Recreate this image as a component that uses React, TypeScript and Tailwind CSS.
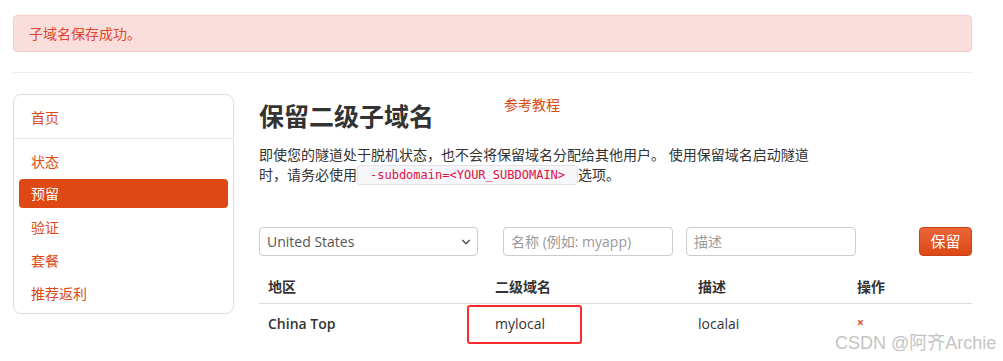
import { ChevronDown } from "lucide-react";

const font = { fontFamily: '"Open Sans", "Noto Sans CJK SC", sans-serif' };

const navItems = ["状态", "预留", "验证", "套餐", "推荐返利"];

export default function App() {
  return (
    <div className="relative min-h-[361px] w-[1003px] bg-white text-[14px] text-[#333]" style={font}>
      <div className="w-[972px] pl-[13px] pt-[15px]">
        {/* alert */}
        <div className="flex h-[37px] items-center rounded-[4px] border border-[#f7cbc8] bg-[#fadedb] px-[15px] text-[#e2432f]">
          子域名保存成功。
        </div>

        <div className="mt-[20px] h-px bg-[#eeeeee]" />

        <div className="mt-[21px] flex gap-[25px]">
          {/* sidebar */}
          <div className="h-[220px] w-[221px] shrink-0 rounded-[8px] border border-[#dddddd] px-[5px] pt-[6px]">
            <div className="flex h-[33px] items-center px-[12px] text-[#dd4814]">首页</div>
            <div className="-mx-[5px] mt-[4px] mb-[6px] h-px bg-[#e5e5e5]" />
            {navItems.map((item) =>
              item === "预留" ? (
                <div
                  key={item}
                  className="mt-[1px] mb-[3px] flex h-[29px] items-center rounded-[4px] bg-[#dd4814] px-[12px] text-white"
                >
                  {item}
                </div>
              ) : (
                <div key={item} className="flex h-[33px] items-center px-[12px] text-[#dd4814]">
                  {item}
                </div>
              )
            )}
          </div>

          {/* main */}
          <div className="flex-1">
            <div className="flex items-start">
              <h2 className="mt-[4px] text-[25px] leading-[36px] font-bold text-[#333]">保留二级子域名</h2>
              <a className="mt-[1px] ml-[70px] text-[14px] leading-[20px] text-[#dd4814]">参考教程</a>
            </div>

            <p className="mt-[11px] w-[563px] leading-[20px]">
              即使您的隧道处于脱机状态，也不会将保留域名分配给其他用户。 使用保留域名启动隧道时，请务必使用
              <code
                className="inline-block rounded-[3px] border border-[#e1e1e8] bg-[#f7f7f9] px-[12px] align-top text-[12px] leading-[18px] text-[#dd1144]"
                style={{ fontFamily: '"DejaVu Sans Mono", monospace' }}
              >
                -subdomain=&lt;YOUR_SUBDOMAIN&gt;
              </code>
              选项。
            </p>

            {/* form */}
            <div className="mt-[42px] flex items-center">
              <div className="flex h-[29px] w-[219px] items-center justify-between rounded-[4px] border border-[#cccccc] pr-[4px] pl-[7px] text-[#555]">
                <span>United States</span>
                <ChevronDown size={14} strokeWidth={2} className="text-[#444]" />
              </div>
              <div className="ml-[25px] flex h-[29px] w-[170px] items-center rounded-[4px] border border-[#cccccc] px-[7px] text-[#9a9a9a]">
                名称 (例如: myapp)
              </div>
              <div className="ml-[13px] flex h-[29px] w-[170px] items-center rounded-[4px] border border-[#cccccc] px-[7px] text-[#9a9a9a]">
                描述
              </div>
              <button className="ml-auto flex h-[29px] w-[53px] items-center justify-center rounded-[4px] border border-[#c8431a] bg-gradient-to-b from-[#ea6536] to-[#dc4813] text-[15px] text-white">
                保留
              </button>
            </div>

            {/* table */}
            <div className="mt-[13px]">
              <div className="flex h-[35px] items-center border-b border-[#dddddd] font-bold">
                <div className="w-[227px] pl-[9px]">地区</div>
                <div className="w-[203px] pl-[9px]">二级域名</div>
                <div className="w-[159px] pl-[9px]">描述</div>
                <div className="pl-[9px]">操作</div>
              </div>
              <div className="flex h-[38px] items-center">
                <div className="w-[227px] pl-[9px] font-semibold">China Top</div>
                <div className="w-[203px] pl-[9px]">mylocal</div>
                <div className="w-[159px] pl-[9px]">localai</div>
                <div className="pl-[9px] text-[12px] font-bold text-[#e8472b]">×</div>
              </div>
            </div>
          </div>
        </div>
      </div>

      {/* annotation overlay */}
      <div className="absolute top-[305px] left-[467px] h-[39px] w-[115px] rounded-[3px] border-2 border-[#ff2b2b]" />

      {/* watermark */}
      <div
        className="absolute top-[331px] left-[835px] text-[18px] leading-[24px] text-[#c4c4c4]"
        style={{ fontFamily: '"Liberation Sans", "Noto Sans CJK SC", sans-serif' }}
      >
        CSDN @阿齐Archie
      </div>
    </div>
  );
}
